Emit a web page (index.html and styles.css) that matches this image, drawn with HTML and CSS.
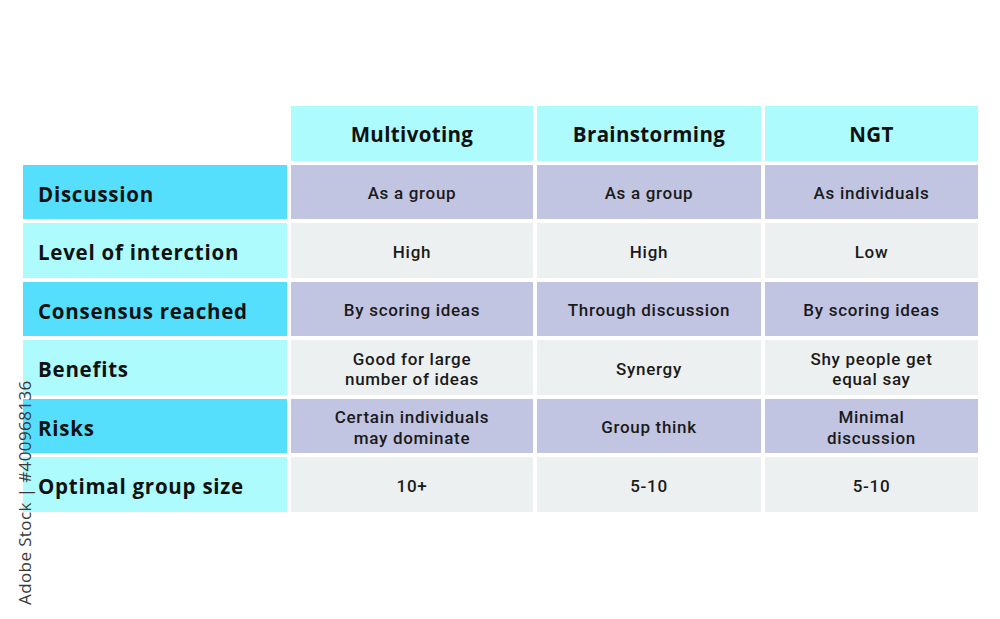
FILE: index.html
```html
<!DOCTYPE html>
<html lang="en">
<head>
<meta charset="utf-8">
<title>Multivoting vs Brainstorming vs NGT</title>
<link rel="stylesheet" href="styles.css">
</head>
<body>
<div class="page">
  <div class="table">
    <div class="blank"></div>
    <div class="colhead">Multivoting</div>
    <div class="colhead">Brainstorming</div>
    <div class="colhead">NGT</div>

    <div class="rowhead dark">Discussion</div>
    <div class="cell lav">As a group</div>
    <div class="cell lav">As a group</div>
    <div class="cell lav">As individuals</div>

    <div class="rowhead light">Level of interction</div>
    <div class="cell gray">High</div>
    <div class="cell gray">High</div>
    <div class="cell gray">Low</div>

    <div class="rowhead dark">Consensus reached</div>
    <div class="cell lav">By scoring ideas</div>
    <div class="cell lav">Through discussion</div>
    <div class="cell lav">By scoring ideas</div>

    <div class="rowhead light">Benefits</div>
    <div class="cell gray"><span class="ln">Good for large</span><span class="ln">number of ideas</span></div>
    <div class="cell gray">Synergy</div>
    <div class="cell gray"><span class="ln">Shy people get</span><span class="ln">equal say</span></div>

    <div class="rowhead dark">Risks</div>
    <div class="cell lav"><span class="ln">Certain individuals</span><span class="ln">may dominate</span></div>
    <div class="cell lav">Group think</div>
    <div class="cell lav"><span class="ln">Minimal</span><span class="ln">discussion</span></div>

    <div class="rowhead light">Optimal group size</div>
    <div class="cell gray">10+</div>
    <div class="cell gray">5-10</div>
    <div class="cell gray">5-10</div>
  </div>
  <div class="stock">Adobe Stock | #400968136</div>
</div>
</body>
</html>
```
FILE: styles.css
```css
* { box-sizing: border-box; }
html, body {
  margin: 0;
  padding: 0;
  background: #ffffff;
}
body {
  width: 1000px;
  height: 619px;
  overflow: hidden;
  font-family: "Open Sans", "Noto Sans", sans-serif;
  color: #111111;
}
.page {
  position: relative;
  width: 1000px;
  height: 619px;
  padding: 106px 0 0 23px;
}
.table {
  display: grid;
  grid-template-columns: 264px 242px 224px 213px;
  grid-auto-rows: 54.5px;
  column-gap: 4px;
  row-gap: 4px;
}
.colhead {
  background: #adfbfd;
  display: flex;
  align-items: center;
  justify-content: center;
  padding-top: 2px;
  font-weight: 700;
  font-size: 20.5px;
  letter-spacing: 0.35px;
}
.rowhead {
  display: flex;
  align-items: center;
  padding: 4px 0 0 15px;
  font-weight: 700;
  font-size: 20.5px;
  letter-spacing: 0.75px;
}
.rowhead.dark { background: #55dffd; }
.rowhead.light { background: #adfbfd; }
.cell {
  display: flex;
  flex-direction: column;
  align-items: center;
  justify-content: center;
  text-align: center;
  padding-top: 4px;
  font-family: Roboto, "Open Sans", sans-serif;
  font-weight: 500;
  font-size: 17px;
  line-height: 21px;
  letter-spacing: 0.7px;
  color: #1a1a1a;
}
.ln {
  display: block;
  line-height: 20.5px;
}
.cell.lav { background: #c2c5e2; }
.cell.gray { background: #edf0f1; }
.stock {
  position: absolute;
  left: 13px;
  top: 605px;
  transform: rotate(-90deg);
  transform-origin: 0 0;
  white-space: nowrap;
  font-family: "Open Sans", sans-serif;
  font-size: 17px;
  color: #3a3a3a;
  letter-spacing: 0.4px;
}
```
